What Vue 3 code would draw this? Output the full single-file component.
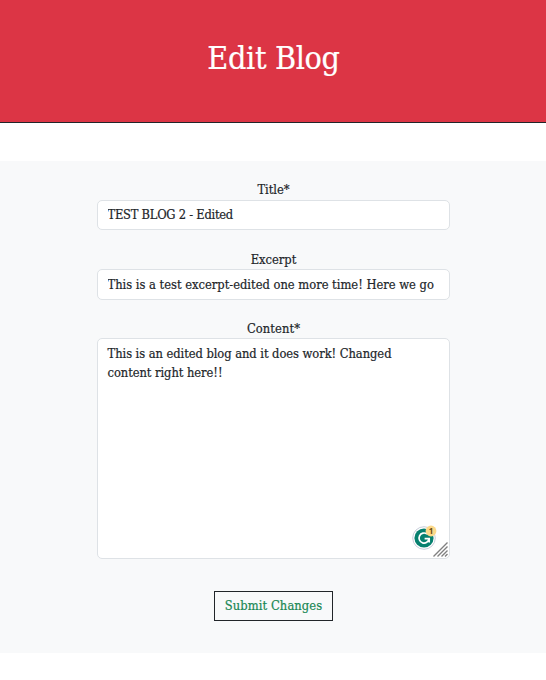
<script setup>
import { ref } from 'vue'

const title = ref('TEST BLOG 2 - Edited')
const excerpt = ref('This is a test excerpt-edited one more time! Here we go')
const content = ref('This is an edited blog and it does work! Changed\ncontent right here!!')
</script>

<template>
  <div class="page">
    <header class="banner">
      <h1>Edit Blog</h1>
    </header>
    <form class="panel" @submit.prevent>
      <label class="title-label" for="title">Title*</label>
      <input id="title" v-model="title" class="field title-field" type="text" />
      <label class="excerpt-label" for="excerpt">Excerpt</label>
      <input id="excerpt" v-model="excerpt" class="field excerpt-field" type="text" />
      <label class="content-label" for="content">Content*</label>
      <div class="editor">
        <textarea id="content" v-model="content" class="field area" spellcheck="false"></textarea>
        <svg class="assistant" width="26" height="26" viewBox="0 0 26 26">
          <circle cx="12" cy="14" r="11.3" fill="#fff" stroke="#c9cedb" />
          <circle cx="12" cy="14" r="9.6" fill="#07806f" />
          <path d="M15 10A5 5 0 1 0 17 14.6M12.6 14.6H17.2V18.4" fill="none" stroke="#fff" stroke-width="1.7" />
          <circle cx="19" cy="7" r="5.4" fill="#fcd98a" />
          <text x="19" y="10" text-anchor="middle">1</text>
        </svg>
        <svg class="grip" width="15" height="15" viewBox="0 0 15 15">
          <path d="M0.5 14.5L14.5 0.5M4.5 14.5L14.5 4.5M8.5 14.5L14.5 8.5M12 14.5L14.5 12" stroke="#808080" stroke-width="1.4" />
        </svg>
      </div>
      <button class="submit" type="submit">Submit Changes</button>
    </form>
  </div>
</template>

<style>
body {
  background: #fff;
}
</style>

<style scoped>
.page {
  font-family: "DejaVu Serif Condensed", "DejaVu Serif", serif;
  font-stretch: condensed;
  font-size: 12.8px;
  line-height: 19px;
  color: #212529;
  -webkit-text-stroke: 0.2px;
}
.banner {
  box-sizing: border-box;
  height: 123px;
  padding-top: 39px;
  background: #dc3545;
  border-bottom: 1px solid #212529;
  text-align: center;
}
h1 {
  margin: 0;
  padding-left: 1px;
  font-size: 32px;
  font-weight: 400;
  line-height: 38px;
  letter-spacing: -0.35px;
  color: #fff;
}
.panel {
  box-sizing: border-box;
  display: flex;
  flex-direction: column;
  align-items: center;
  height: 492px;
  margin-top: 38px;
  padding-top: 19px;
  background: #f8f9fa;
}
label {
  box-sizing: border-box;
  height: 20px;
  padding-left: 1px;
}
.field {
  box-sizing: border-box;
  display: block;
  width: 353px;
  height: 30px;
  margin: 0;
  padding: 4px 10px 5px;
  border: 1px solid #dee2e6;
  border-radius: 5px;
  outline: none;
  background: #fff;
  color: #212529;
  font: inherit;
}
.title-field {
  margin-bottom: 20px;
  letter-spacing: -0.25px;
}
.excerpt-label,
.content-label {
  height: 19px;
}
.excerpt-field {
  height: 31px;
  margin-bottom: 19px;
  padding: 5px 10px;
}
.content-label {
  letter-spacing: 0.1px;
}
.editor {
  position: relative;
}
.area {
  height: 221px;
  padding-top: 5px;
  resize: none;
  overflow: hidden;
  letter-spacing: -0.05px;
}
.assistant {
  position: absolute;
  right: 12px;
  bottom: 9px;
}
.assistant text {
  font: 700 8px "Open Sans", sans-serif;
  fill: #6b4a10;
  -webkit-text-stroke: 0;
}
.grip {
  position: absolute;
  right: 2px;
  bottom: 2px;
}
.submit {
  box-sizing: border-box;
  width: 119px;
  height: 30px;
  margin: 32px 0 0;
  padding: 0 0 2px 1px;
  border: 1px solid #212529;
  background: #f8f9fa;
  color: #198754;
  font: inherit;
  letter-spacing: 0.1px;
  white-space: nowrap;
}
</style>
